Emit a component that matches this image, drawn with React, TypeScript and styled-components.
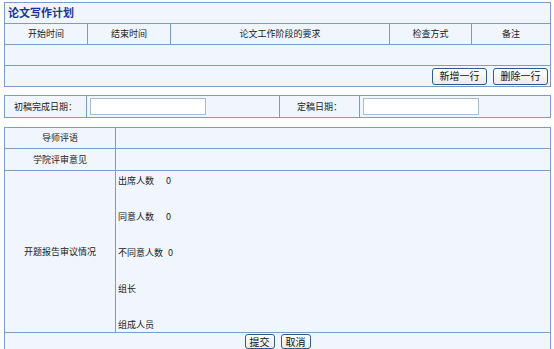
import styled, { createGlobalStyle } from "styled-components";

const GlobalStyle = createGlobalStyle`
  body {
    margin: 0;
    background: #ffffff;
    font-family: "Noto Sans CJK SC", "Liberation Sans", sans-serif;
    font-size: 9px;
    color: #222;
  }
`;

const Page = styled.div`
  display: flex;
  flex-direction: column;
  padding: 2px 4px 0 4px;
`;

type gapProp = {
  gap: number;
};

const Table = styled.table<gapProp>`
  width: 546px;
  border-collapse: collapse;
  table-layout: fixed;
  margin-bottom: ${(props) => props.gap}px;
  background: #f1f5fd;
`;

type rowProp = {
  h: number;
};

const Row = styled.tr<rowProp>`
  height: ${(props) => props.h}px;
`;

type cellProp = {
  align?: string;
  valign?: string;
};

const Cell = styled.td<cellProp>`
  border: 1px solid #7b9cc9;
  padding: 0 2px;
  text-align: ${(props) => props.align || "center"};
  vertical-align: ${(props) => props.valign || "middle"};
  line-height: 12px;
  white-space: nowrap;
  overflow: hidden;
`;

const Title = styled.span`
  font-size: 11px;
  font-weight: bold;
  color: #18369c;
  padding-left: 1px;
`;

const Btn = styled.button`
  font-family: "Noto Sans CJK SC", "Liberation Sans", sans-serif;
  font-size: 10px;
  line-height: 12px;
  height: 17px;
  padding: 0 4px;
  color: #111;
  background: linear-gradient(#ffffff, #ecebe6);
  border: 1px solid #2f5a8c;
  border-radius: 3px;
  cursor: pointer;
`;

const BtnRow = styled.div<{ justify: string }>`
  display: flex;
  justify-content: ${(props) => props.justify};
  gap: 6px;
`;

const WideBtn = styled(Btn)`
  width: 55px;
`;

const SmallBtn = styled(Btn)`
  height: 15px;
  line-height: 11px;
  margin-top: 1px;
`;

const DateInput = styled.input`
  box-sizing: border-box;
  width: 116px;
  height: 17px;
  margin-left: 1px;
  border: 1px solid #a8bcd8;
  background: #fff;
  display: block;
`;

const Lines = styled.div`
  display: flex;
  flex-direction: column;
  gap: 24px;
  padding: 4px 0 0 0;
`;

const Line = styled.div`
  display: flex;
  gap: 12px;
  height: 12px;
`;

const Count = styled.span<{ shift: number }>`
  margin-left: ${(props) => props.shift}px;
`;

const headers = ["开始时间", "结束时间", "论文工作阶段的要求", "检查方式", "备注"];

const votes = [
  { label: "出席人数", value: "0", shift: 0 },
  { label: "同意人数", value: "0", shift: 0 },
  { label: "不同意人数", value: "0", shift: -7 },
  { label: "组长", value: "", shift: 0 },
  { label: "组成人员", value: "", shift: 0 },
];

export default function App() {
  return (
    <>
      <GlobalStyle />
      <Page>
        <Table gap={8}>
          <colgroup>
            <col style={{ width: 83 }} />
            <col style={{ width: 83 }} />
            <col style={{ width: 219 }} />
            <col style={{ width: 82 }} />
            <col style={{ width: 79 }} />
          </colgroup>
          <tbody>
            <Row h={21}>
              <Cell colSpan={5} align="left">
                <Title>论文写作计划</Title>
              </Cell>
            </Row>
            <Row h={21}>
              {headers.map((h) => (
                <Cell key={h}>{h}</Cell>
              ))}
            </Row>
            <Row h={21}>
              <Cell colSpan={5} />
            </Row>
            <Row h={21}>
              <Cell colSpan={5} align="right">
                <BtnRow justify="flex-end">
                  <WideBtn>新增一行</WideBtn>
                  <WideBtn>删除一行</WideBtn>
                </BtnRow>
              </Cell>
            </Row>
          </tbody>
        </Table>

        <Table gap={9}>
          <colgroup>
            <col style={{ width: 82 }} />
            <col style={{ width: 193 }} />
            <col style={{ width: 80 }} />
            <col style={{ width: 191 }} />
          </colgroup>
          <tbody>
            <Row h={22}>
              <Cell>初稿完成日期：</Cell>
              <Cell align="left">
                <DateInput />
              </Cell>
              <Cell>定稿日期：</Cell>
              <Cell align="left">
                <DateInput />
              </Cell>
            </Row>
          </tbody>
        </Table>

        <Table gap={0}>
          <colgroup>
            <col style={{ width: 111 }} />
            <col style={{ width: 435 }} />
          </colgroup>
          <tbody>
            <Row h={21}>
              <Cell>导师评语</Cell>
              <Cell />
            </Row>
            <Row h={22}>
              <Cell>学院评审意见</Cell>
              <Cell />
            </Row>
            <Row h={162}>
              <Cell>开题报告审议情况</Cell>
              <Cell align="left" valign="top">
                <Lines>
                  {votes.map((v) => (
                    <Line key={v.label}>
                      <span>{v.label}</span>
                      {v.value && <Count shift={v.shift}>{v.value}</Count>}
                    </Line>
                  ))}
                </Lines>
              </Cell>
            </Row>
            <Row h={20}>
              <Cell colSpan={2} valign="top">
                <BtnRow justify="center">
                  <SmallBtn>提交</SmallBtn>
                  <SmallBtn>取消</SmallBtn>
                </BtnRow>
              </Cell>
            </Row>
          </tbody>
        </Table>
      </Page>
    </>
  );
}
